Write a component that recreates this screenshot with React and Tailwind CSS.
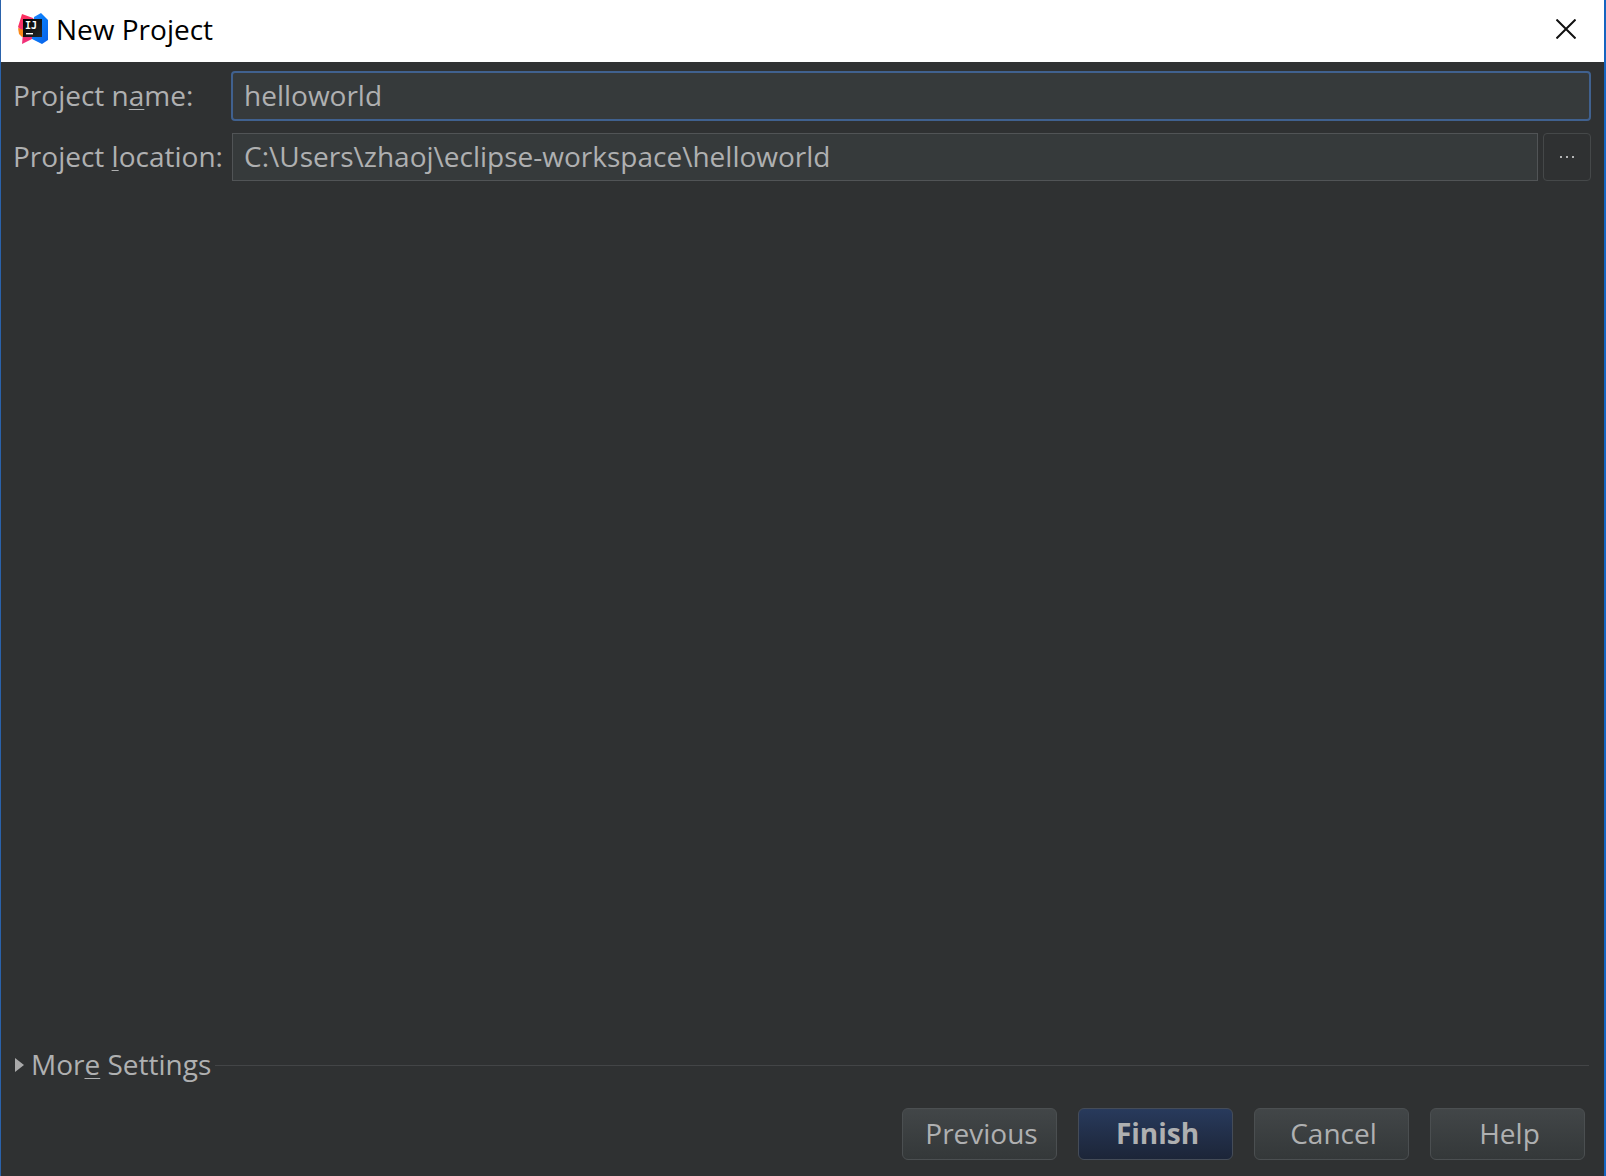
import React from 'react';

const Key = ({ children }) => (
  <span className="underline decoration-1 underline-offset-3 [text-decoration-skip-ink:none]">{children}</span>
);

const Logo = () => (
  <svg className="h-8 w-8" viewBox="0 0 32 32" aria-hidden="true">
    <defs>
      <linearGradient id="pink" x1="0" y1="0" x2="0.3" y2="1">
        <stop offset="0" stopColor="#fe315d" />
        <stop offset="1" stopColor="#f0307a" />
      </linearGradient>
      <linearGradient id="blue" x1="0" y1="0" x2="1" y2="1">
        <stop offset="0" stopColor="#2f86f8" />
        <stop offset="0.4" stopColor="#087cfa" />
        <stop offset="1" stopColor="#0a60e8" />
      </linearGradient>
      <linearGradient id="dark" x1="0" y1="0" x2="1" y2="1">
        <stop offset="0" stopColor="#000000" />
        <stop offset="1" stopColor="#26282a" />
      </linearGradient>
    </defs>
    <path d="M5 1 L16 5 L19 12 L17 25 L5 31 L6 20 L1 14 Z" fill="url(#pink)" />
    <path d="M1 15 L9 18 L8 23 L5 24 L2 21 Z" fill="#fb8a1a" />
    <path d="M24 0 L31 7 L31 27 L25 31 L15 26 L17 4 Z" fill="url(#blue)" />
    <rect x="6" y="6" width="19" height="18" fill="url(#dark)" />
    <text x="8" y="16" fontSize="10" fontWeight="700" fontFamily="DejaVu Sans Mono, monospace" fill="#ffffff">IJ</text>
    <rect x="9" y="20" width="7" height="1.4" fill="#ffffff" />
  </svg>
);

const Button = ({ primary, children }) => (
  <button
    type="button"
    className={
      'h-[52px] w-[155px] rounded-md border bg-linear-to-b pl-1 pb-0.5 ' +
      (primary
        ? 'border-[#454c58] from-[#283a5c] to-[#1c2538] font-bold'
        : 'border-[#4b4f51] from-[#424648] to-[#343839]')
    }
  >
    {children}
  </button>
);

export default function App() {
  return (
    <div className="flex min-h-screen flex-col border-l border-r-2 border-l-[#2a62ab] border-r-[#1565c0] bg-[#2f3132] font-['Open_Sans',sans-serif] text-[28px] leading-9 text-[#afb0b1]">
      <header className="flex h-[62px] items-center bg-white pr-[22px] pb-1 pl-4 text-black">
        <Logo />
        <h1 className="ml-[7px]">New Project</h1>
        <button type="button" aria-label="Close" className="ml-auto flex h-8 w-8 items-center justify-center">
          <svg className="h-5 w-5" viewBox="0 0 20 20" aria-hidden="true">
            <path d="M0.5 0.5 L19.5 19.5 M19.5 0.5 L0.5 19.5" stroke="#111" strokeWidth="2" fill="none" />
          </svg>
        </button>
      </header>

      <main className="flex grow flex-col pr-[13px] pl-3">
        <form className="grid grid-cols-[218px_1fr] items-center gap-y-3 pt-[9px]">
          <label htmlFor="name" className="pb-0.5">
            Project n<Key>a</Key>me:
          </label>
          <input
            id="name"
            type="text"
            defaultValue="helloworld"
            className="h-[50px] w-full rounded-sm border-2 border-[#40618f] bg-[#363a3b] px-[11px] pb-0.5 outline-none"
          />
          <label htmlFor="location" className="pb-0.5">
            Project <Key>l</Key>ocation:
          </label>
          <div className="flex gap-[5px] pl-px">
            <input
              id="location"
              type="text"
              defaultValue="C:\Users\zhaoj\eclipse-workspace\helloworld"
              className="h-12 min-w-0 grow border border-[#515456] bg-[#363a3b] px-[11px] pb-0.5 outline-none"
            />
            <button
              type="button"
              aria-label="Browse"
              className="flex h-12 w-12 items-center justify-center gap-1 rounded-sm border border-[#454849]"
            >
              <span className="h-0.5 w-0.5 bg-[#b4b5b6]" />
              <span className="h-0.5 w-0.5 bg-[#b4b5b6]" />
              <span className="h-0.5 w-0.5 bg-[#b4b5b6]" />
            </button>
          </div>
        </form>

        <button type="button" className="mt-auto flex items-center">
          <svg className="mr-[7px] ml-0.5 h-4 w-[9px]" viewBox="0 0 9 16" aria-hidden="true">
            <path d="M0 1 L9 8 L0 15 Z" fill="#a9a9aa" />
          </svg>
          <span className="pb-0.5">
            Mor<Key>e</Key> Settings
          </span>
          <span className="mr-0.5 ml-1 h-px grow bg-[#434547]" />
        </button>

        <footer className="flex justify-end gap-[21px] pt-6 pr-1.5 pb-4">
          <Button>Previous</Button>
          <Button primary>Finish</Button>
          <Button>Cancel</Button>
          <Button>Help</Button>
        </footer>
      </main>
    </div>
  );
}
